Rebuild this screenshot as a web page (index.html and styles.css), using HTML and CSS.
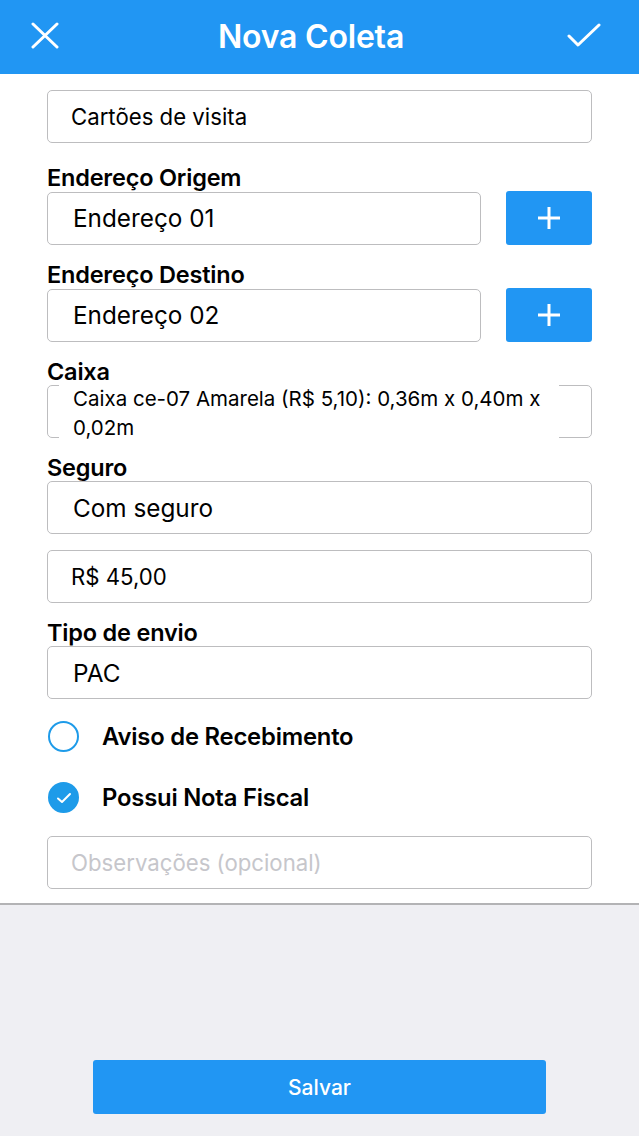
FILE: index.html
```html
<!DOCTYPE html>
<html lang="pt">
<head>
<meta charset="utf-8">
<title>Nova Coleta</title>
<link rel="stylesheet" href="styles.css">
</head>
<body>
<header class="topbar">
  <button class="icon-btn" aria-label="Fechar">
    <svg width="28" height="28" viewBox="0 0 28 28"><path d="M2 2 L26 25 M26 2 L2 25" stroke="#fff" stroke-width="3" stroke-linecap="round" fill="none"/></svg>
  </button>
  <h1 class="title">Nova Coleta</h1>
  <button class="icon-btn" aria-label="Confirmar">
    <svg width="34" height="26" viewBox="0 0 34 26"><path d="M2 13 L11 22 L32 2" stroke="#fff" stroke-width="3" stroke-linecap="round" stroke-linejoin="round" fill="none"/></svg>
  </button>
</header>

<main class="form">
  <div class="field field-sm first">Cartões de visita</div>

  <div class="label">Endereço Origem</div>
  <div class="row">
    <div class="field">Endereço 01</div>
    <button class="add-btn" aria-label="Adicionar">
      <svg width="24" height="24" viewBox="0 0 24 24"><path d="M12 1 V23 M1 12 H23" stroke="#fff" stroke-width="3" fill="none"/></svg>
    </button>
  </div>

  <div class="label">Endereço Destino</div>
  <div class="row">
    <div class="field">Endereço 02</div>
    <button class="add-btn" aria-label="Adicionar">
      <svg width="24" height="24" viewBox="0 0 24 24"><path d="M12 1 V23 M1 12 H23" stroke="#fff" stroke-width="3" fill="none"/></svg>
    </button>
  </div>

  <div class="label">Caixa</div>
  <div class="field field-multi">
    <div class="multi-text">Caixa ce-07 Amarela (R$ 5,10): 0,36m x 0,40m x 0,02m</div>
  </div>

  <div class="label">Seguro</div>
  <div class="field">Com seguro</div>
  <div class="field field-sm spaced">R$ 45,00</div>

  <div class="label">Tipo de envio</div>
  <div class="field">PAC</div>

  <div class="check-row first-check">
    <span class="radio"></span>
    <span class="check-label">Aviso de Recebimento</span>
  </div>
  <div class="check-row">
    <span class="radio checked">
      <svg width="16" height="12" viewBox="0 0 16 12"><path d="M2 6.5 L6 10 L14 2" stroke="#fff" stroke-width="2" stroke-linecap="round" stroke-linejoin="round" fill="none"/></svg>
    </span>
    <span class="check-label">Possui Nota Fiscal</span>
  </div>

  <div class="field field-sm placeholder obs">Observações (opcional)</div>
</main>

<footer class="footer">
  <button class="save-btn">Salvar</button>
</footer>
</body>
</html>
```

FILE: styles.css
```css
* { box-sizing: border-box; }

html, body {
  margin: 0;
  padding: 0;
}

body {
  width: 639px;
  min-height: 1136px;
  display: flex;
  flex-direction: column;
  font-family: Inter, "Liberation Sans", Arial, sans-serif;
  color: #000;
  background: #efeff3;
}

.topbar {
  height: 74px;
  background: #2196f3;
  display: flex;
  align-items: center;
  justify-content: space-between;
  padding: 0 38px 2px 31px;
}

.icon-btn {
  background: none;
  border: 0;
  padding: 0;
  display: flex;
  align-items: center;
}

.title {
  margin: 0;
  color: #fff;
  font-size: 32px;
  font-weight: 600;
  letter-spacing: -0.2px;
  padding-right: 4px;
}

.form {
  background: #fff;
  padding: 16px 47px 14px 47px;
  border-bottom: 2px solid #b3b3b5;
  display: flex;
  flex-direction: column;
}

.label {
  font-size: 23.5px;
  font-weight: 600;
  line-height: 26px;
  height: 26px;
  margin-top: 17px;
  letter-spacing: -0.2px;
}

.form > .field.first + .label {
  margin-top: 22px;
}

.field {
  height: 53px;
  border: 1px solid #bdbdbf;
  border-radius: 5px;
  display: flex;
  align-items: center;
  padding: 0 0 0 25px;
  font-size: 24.3px;
  background: #fff;
  flex: 1;
  flex-shrink: 0;
}

.form > .field { flex: none; }

.field-sm {
  font-size: 22.2px;
  padding-left: 23px;
}

.spaced { margin-top: 16px; }

.row {
  display: flex;
  gap: 25px;
  align-items: center;
}

.add-btn {
  width: 86px;
  height: 54px;
  border: 0;
  border-radius: 3px;
  background: #2196f3;
  display: flex;
  align-items: center;
  justify-content: center;
  flex-shrink: 0;
}

.field-multi {
  padding: 0;
  align-items: stretch;
}

.multi-text {
  margin: -2px 32px -2px 11px;
  padding: 0 0 0 14px;
  background: #fff;
  font-size: 20.5px;
  line-height: 29px;
  flex: 1;
}

.check-row {
  display: flex;
  align-items: center;
  height: 61px;
  padding-left: 1px;
}

.first-check { margin-top: 7px; }

.radio {
  width: 31px;
  height: 31px;
  border-radius: 50%;
  border: 2px solid #1e9be9;
  display: flex;
  align-items: center;
  justify-content: center;
  flex-shrink: 0;
}

.radio.checked {
  background: #1e9be9;
}

.check-label {
  margin-left: 23px;
  font-size: 23.8px;
  font-weight: 600;
  letter-spacing: -0.2px;
}

.obs { margin-top: 8px; }

.placeholder { color: #c6c6cb; }

.footer {
  flex: 1;
  display: flex;
  align-items: flex-end;
  justify-content: center;
  padding-bottom: 22px;
}

.save-btn {
  width: 453px;
  height: 54px;
  border: 0;
  border-radius: 3px;
  background: #2196f3;
  color: #fff;
  font-family: Inter, "Liberation Sans", Arial, sans-serif;
  font-size: 21px;
  font-weight: 500;
}
```
